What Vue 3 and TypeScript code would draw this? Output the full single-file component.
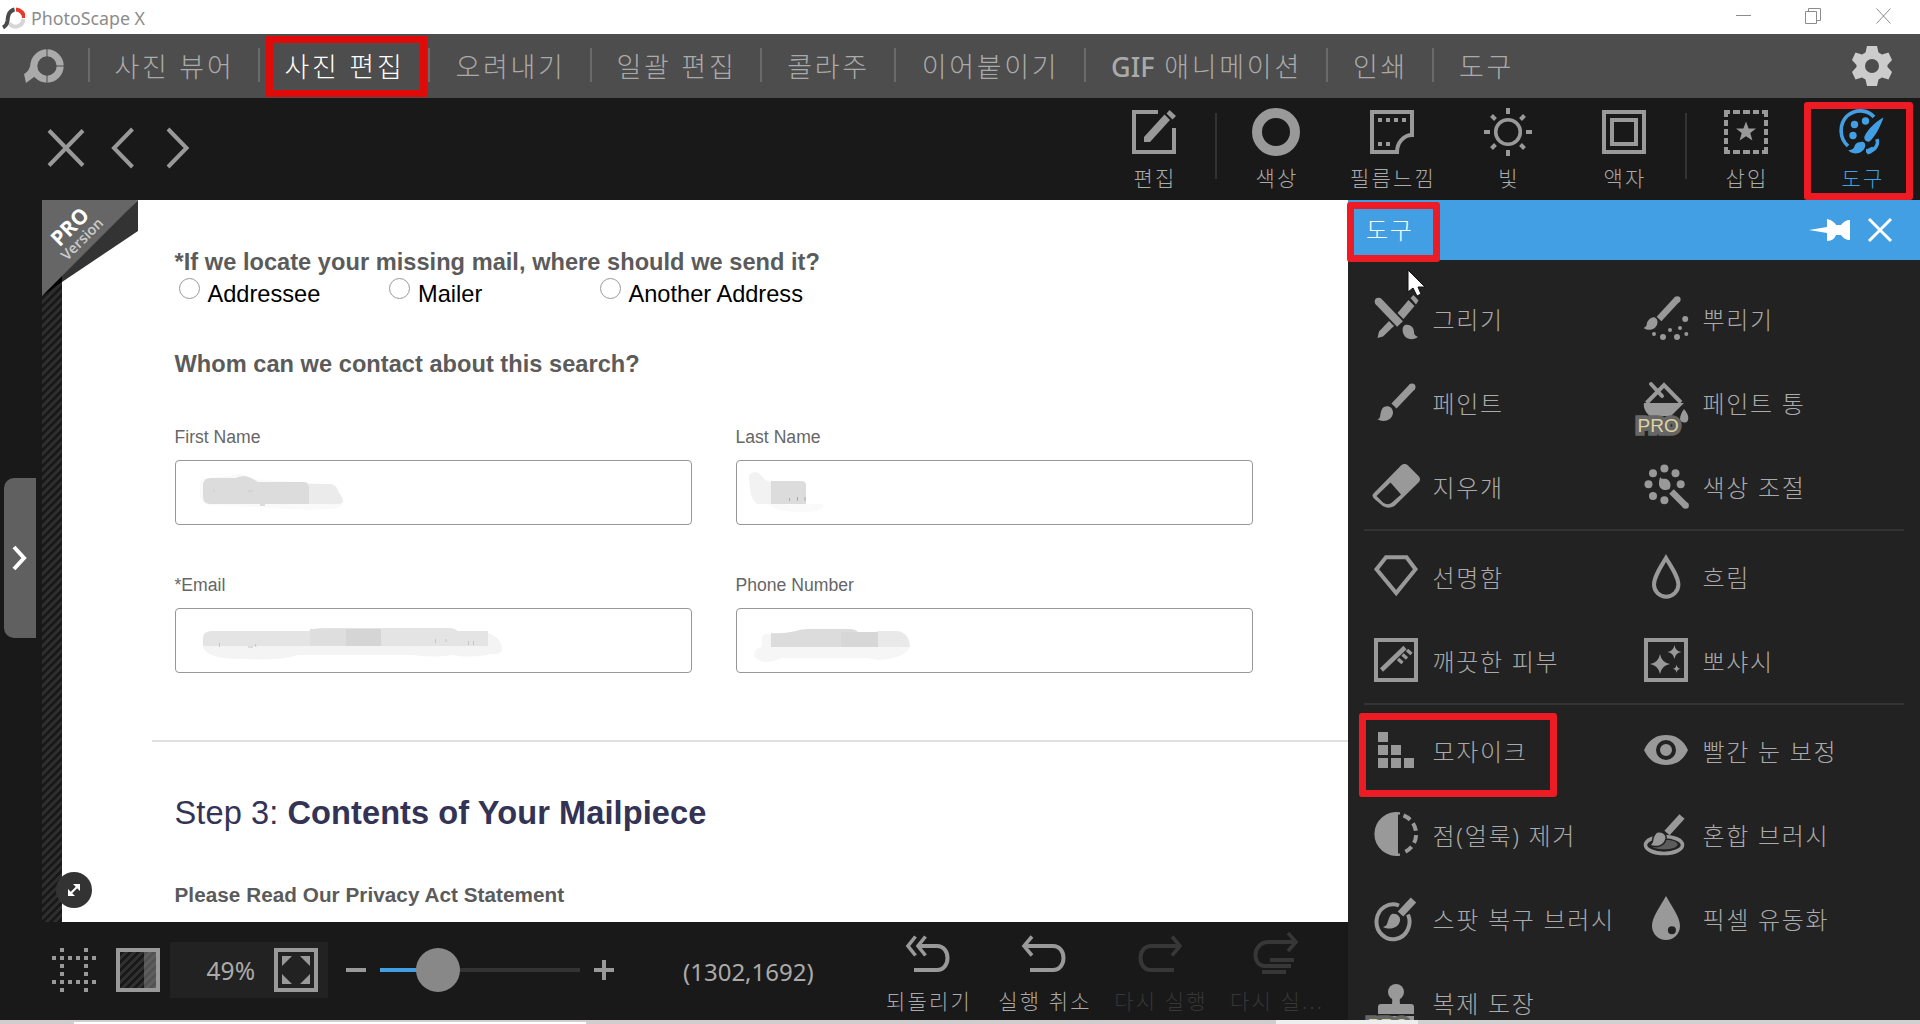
<script setup lang="ts">
interface MenuItem { label: string; width: number; active?: boolean; latin?: string }
interface IconItem { label: string; icon: string; pro?: boolean; active?: boolean; marked?: boolean; off?: boolean; sepBefore?: boolean }

const menu: MenuItem[] = [
  { label: '사진 뷰어', width: 170 },
  { label: '사진 편집', width: 170, active: true },
  { label: '오려내기', width: 162 },
  { label: '일괄 편집', width: 170 },
  { label: '콜라주', width: 134 },
  { label: '이어붙이기', width: 190 },
  { label: ' 애니메이션', width: 242, latin: 'GIF' },
  { label: '인쇄', width: 106 },
  { label: '도구', width: 106 },
]

const toolbar: IconItem[] = [
  { label: '편집', icon: '<path d="M28 4H4v40h40V20" fill="none" stroke="currentColor" stroke-width="4"/><path d="M14 29L34.500 6.500 40 12 20 34H14z"/><path d="M36.500 5.500L39.500 2 46 8 42.500 11.500z"/>' },
  { label: '색상', icon: '<circle cx="24" cy="24" r="19" fill="none" stroke="currentColor" stroke-width="10"/>', sepBefore: true },
  { label: '필름느낌', icon: '<path d="M4 4H44V27A15 17 0 0 0 29 44H4z" fill="none" stroke="currentColor" stroke-width="4"/><path d="M10 10h4v4h-4zM18 10h4v4h-4zM26 10h4v4h-4zM34 10h4v4h-4zM10 34h4v4h-4zM18 34h4v4h-4z"/>' },
  { label: '빛', icon: '<circle cx="24" cy="24" r="12.300" fill="none" stroke="currentColor" stroke-width="3.600"/><path d="M24 0v6M24 42v6M0 24h6M42 24h6M7.500 7.500l4 4M36.500 36.500l4 4M7.500 40.500l4-4M36.500 11.500l4-4" stroke="currentColor" stroke-width="4"/>' },
  { label: '액자', icon: '<path d="M4 4h40v40H4zM12 12h24v24H12z" fill="none" stroke="currentColor" stroke-width="4"/>' },
  { label: '삽입', icon: '<path d="M2 2h6v4H6v3H2zM40 2h6v7h-4V6h-2zM2 39h4v3h2v4H2zM42 39h4v7h-6v-4h2zM11 2h7v4h-7zM21 2h7v4h-7zM31 2h6v4h-6zM11 42h7v4h-7zM21 42h7v4h-7zM31 42h6v4h-6zM2 12h4v6H2zM2 21h4v6H2zM2 30h4v6H2zM42 12h4v6h-4zM42 21h4v6h-4zM42 30h4v6h-4z"/><path d="M24 13.500l2.600 7H34l-5.700 4.600 2.100 7.400-6.400-4.300-6.400 4.300 2.100-7.400L14 20.500h7.400z"/>', sepBefore: true },
  { label: '도구', icon: '<path d="M10 38C1 30 1 16 9 8c8-7 20-7 27 1" fill="none" stroke="currentColor" stroke-width="3.600"/><circle cx="27.500" cy="13" r="3.700"/><circle cx="16.500" cy="16.500" r="3.700"/><circle cx="15" cy="27.500" r="3.700"/><path d="M45.500 9.500c-3 9-9 20-14 24-3 1-6-2-5-5 3-7 11-15 19-19z"/><path d="M23 34c3-1 5 2 4 5-2 6-9 8-15 5-1-1-1-2-2-2 5 0 6-2 7-5 1-2 3-3 6-3z"/><path d="M39 31c2 6-2 11-10 14M28 43c3 0 5-2 7-3" fill="none" stroke="currentColor" stroke-width="3.400"/>', active: true },
]

const groups: IconItem[][] = [
  [
    { label: '그리기', icon: '<path d="M6.500 7.500L28 30" stroke="currentColor" stroke-width="8" stroke-linecap="butt"/><circle cx="6.500" cy="7.500" r="3.800"/><path d="M33 31c5-1 9 2 9 7 0 2 1 4 4 5-6 4-12 2-14-2-2-4-2-8 1-10zM25.500 19L36.500 6l6 6-11 13zM38.500 4l3-3 5 5.500-2.500 4zM17 27l5 5-11 10.500-5.500 1.500 1.500-6.500z"/>' },
    { label: '뿌리기', icon: '<path d="M35 5.500L17 25" stroke="currentColor" stroke-width="6.500"/><circle cx="35.300" cy="5.500" r="3.300"/><path d="M9 24c4-2 7 1 6.500 5-1 6-8 9-14 5 3-1 3-3 3.500-5 .5-2 2-4 4-5z"/><circle cx="43.200" cy="25" r="3"/><circle cx="38" cy="34" r="2"/><circle cx="28" cy="36" r="2"/><circle cx="12" cy="40" r="2"/><circle cx="21" cy="43" r="3"/><circle cx="35" cy="43" r="3"/><circle cx="44.300" cy="40" r="2"/>' },
    { label: '페인트', icon: '<path d="M40 9L22 28" stroke="currentColor" stroke-width="7"/><circle cx="40" cy="9" r="3.500"/><path d="M12 29c5-2 9 1 9 6-1 8-10 10-16 6 3 0 3-2 3.500-5s1.500-6 3.500-7z"/>' },
    { label: '페인트 통', icon: '<path d="M4.500 25L22 7l17 17.500" fill="none" stroke="currentColor" stroke-width="4"/><path d="M2 25h40l-13 13H8c-4-3-7-8-6-13z"/><path d="M9 6l11 12" stroke="currentColor" stroke-width="4" stroke-linecap="round"/><path d="M42 31c3 4 5 7 4 11s-8 3-8-1 2-7 4-10z"/>', pro: true },
    { label: '지우개', icon: '<path d="M2 31L29 3.500c2-2 5-2 7 0L46.500 14c2 2 2 4.500 0 6.500L23 43.500c-4 3-10 3-14-1l-7-6c-2-2-2-4 0-5.500z"/><path d="M4.500 34L18.500 20.500 29 32.500 20 40.500c-3 2.500-7 2-9.500-.5z" fill="#222"/>' },
    { label: '색상 조절', icon: '<circle cx="22.400" cy="6.500" r="4"/><circle cx="33.500" cy="11.300" r="4"/><circle cx="38.700" cy="22.300" r="4"/><circle cx="6.500" cy="22.300" r="4"/><circle cx="11" cy="11.300" r="4"/><circle cx="11" cy="34" r="4"/><circle cx="22.400" cy="38.300" r="4"/><path d="M18.500 15c1 3 3 1 6 2 4 2 5 6 3 10-6 3-11-1-10.500-6 0-3 .5-4 1.500-6z"/><path d="M29.500 29.500l14 14" stroke="currentColor" stroke-width="6.500"/><circle cx="43.600" cy="43.500" r="3.300"/>' },
  ],
  [
    { label: '선명함', icon: '<path d="M14 5.200h20.500l9 12L24.200 41 4.500 17.200z" fill="none" stroke="currentColor" stroke-width="4"/>' },
    { label: '흐림', icon: '<path d="M24 6C18 16 12 25 12 32.500a12 12 0 0 0 24.400 0C36.400 25 30 16 24 6z" fill="none" stroke="currentColor" stroke-width="4"/>' },
    { label: '깨끗한 피부', icon: '<path d="M4 4h40v40H4z" fill="none" stroke="currentColor" stroke-width="4"/><path d="M9.500 34L33 11.500" stroke="currentColor" stroke-width="4.500"/><path d="M35 14l4.500 4M30.500 18.500l4.500 4M26 23l4.500 4" stroke="currentColor" stroke-width="3.400"/>' },
    { label: '뽀샤시', icon: '<path d="M4 4h40v40H4z" fill="none" stroke="currentColor" stroke-width="4"/><path d="M18 18q1.500 8.500 10 10-8.500 1.500-10 10-1.500-8.500-10-10 8.500-1.500 10-10zM32.400 9q1 6 7 7-6 1-7 7-1-6-7-7 6-1 7-7zM34.600 28.500q.5 4 4 4.300-3.500.5-4 4.200-.5-3.700-4-4.200 3.500-.3 4-4.300z"/>' },
  ],
  [
    { label: '모자이크', icon: '<path d="M6 6h10v10H6zM6 19h10v10H6zM19 19h10v10H19zM6 32h10v10H6zM19 32h10v10H19zM32 32h10v10H32z"/>', marked: true },
    { label: '빨간 눈 보정', icon: '<path d="M2 24C7 13 15 9 24 9s17 4 22 15c-5 11-13 15-22 15S7 35 2 24z"/><circle cx="24" cy="24" r="8" fill="none" stroke="#222" stroke-width="4"/>' },
    { label: '점(얼룩) 제거', icon: '<path d="M28 2.300A22 22 0 1 0 28 45.700V43.500h-2V4.500h2z"/><path d="M31.500 5.400A20 20 0 0 1 31.500 42.600" fill="none" stroke="currentColor" stroke-width="4" stroke-dasharray="8 4.500"/>' },
    { label: '혼합 브러시', icon: '<ellipse cx="22" cy="35" rx="18.500" ry="8.500" fill="none" stroke="currentColor" stroke-width="3.600"/><ellipse cx="22" cy="34.500" rx="13.500" ry="4.800" fill="#5c5c5c"/><path d="M40 6.500L25 23" stroke="currentColor" stroke-width="7"/><path d="M15 22c5-1 10 2 9 7-2 8-11 9-17 6 4-1 3-3 4-7 1-3 2-5 4-6z" stroke="#222" stroke-width="1.500"/>' },
    { label: '스팟 복구 브러시', icon: '<path d="M27 11.500A16.500 17.500 0 1 0 36 20.500" fill="none" stroke="currentColor" stroke-width="4"/><path d="M41.500 6L28.500 20" stroke="currentColor" stroke-width="7.500"/><path d="M20 20c5-1 9 3 8 7-2 8-11 9-17 6 4-1 4-3 5-6s2-6 4-7z"/>' },
    { label: '픽셀 유동화', icon: '<path d="M24 2C18 13 10 23 10 32a14 14 0 0 0 28 0C38 23 30 13 24 2z"/><circle cx="29.900" cy="36.300" r="4" fill="#222"/>' },
    { label: '복제 도장', icon: '<circle cx="24" cy="14" r="8"/><path d="M19 18c2 4 1 6 1 8h-11q-3 0-3 3v7h36v-7q0-3-3-3H28c0-2-1-4 1-8zM6 38h36v8H6z"/>', pro: true },
  ],
]

const history: IconItem[] = [
  { label: '되돌리기', icon: '<path d="M11.500 4.500L4 14l7.500 9.500M21.500 4.500L14 14l7.500 9.500" fill="none" stroke="currentColor" stroke-width="3.600"/><path d="M14 14h19c14 0 14 24 0 24H10" fill="none" stroke="currentColor" stroke-width="4"/>' },
  { label: '실행 취소', icon: '<path d="M12 4.500L4 14l8 9.500" fill="none" stroke="currentColor" stroke-width="3.600"/><path d="M4 14h29c14 0 14 24 0 24H10" fill="none" stroke="currentColor" stroke-width="4"/>' },
  { label: '다시 실행', icon: '<path d="M36 4.500l8 9.500-8 9.500" fill="none" stroke="currentColor" stroke-width="3.600"/><path d="M44 14H15c-14 0-14 24 0 24h23" fill="none" stroke="currentColor" stroke-width="4"/>', off: true },
  { label: '다시 실...', icon: '<path d="M36 1l8 9-8 9" fill="none" stroke="currentColor" stroke-width="3.600"/><path d="M44 10H16C0 11 0 33 12 34h27M18 28h24M10 40h24" fill="none" stroke="currentColor" stroke-width="4"/>', off: true },
]
</script>

<template>
  <div class="app">
    <header class="titlebar">
      <svg class="mini-logo" width="24" height="24" viewBox="0 0 24 24" fill="none" stroke-width="4">
        <path d="M16 3.500A8.500 8.500 0 0 1 24 12" transform="translate(-1 0)" stroke="#ee3526" />
        <path d="M22.500 13A8 8.500 0 0 1 8 17" stroke="#d6d6d6" />
        <path d="M13.500 3.500C7 5 7 11 6.500 15 6 18 5 20 2 21.500" stroke="#4a4a4a" />
      </svg>
      <span class="app-name">PhotoScape X</span>
      <svg class="win-buttons" width="160" height="18" viewBox="0 0 160 18" fill="none" stroke="#8c8c8c">
        <path d="M0 8.500h15M69.500 4.500h11v12h-11zM72.500 4.500v-3h12v12h-4M140.500 1.500l14 15M154.500 1.500l-14 15" />
      </svg>
    </header>

    <nav class="menubar">
      <svg class="logo" width="44" height="44" viewBox="0 0 44 44">
        <circle cx="26" cy="22" r="13.200" fill="none" stroke="#aaa" stroke-width="7" />
        <path d="M11 17C8 25 8 27 3 30l2 9 8-6 6 1z" fill="#aaa" />
        <path d="M26 4v9M26 31v9M34 22h9" stroke="#4d4d4d" />
      </svg>
      <div v-for="m in menu" :key="m.label" class="menu-item" :class="{ active: m.active }" :style="{ width: m.width + 'px' }">
        <span><b v-if="m.latin">{{ m.latin }}</b>{{ m.label }}</span>
        <i v-if="m.active" class="mark mark-menu"></i>
      </div>
      <svg class="gear" width="40" height="40" viewBox="0 0 40 40" fill="#ccc">
        <path fill-rule="evenodd" d="M15 0h10l1.500 6.500 3.500 2 6.500-2L40 14l-4.500 5v2l4.500 5-3.500 7.500-6.500-2-3.500 2L25 40H15l-1.500-6.500-3.500-2-6.500 2L0 26l4.500-5v-2L0 14l3.500-7.500 6.500 2 3.500-2zM20 13a7 7 0 1 0 0 14 7 7 0 0 0 0-14z" />
      </svg>
    </nav>

    <div class="toolbar">
      <svg class="nav-icons" width="150" height="44" viewBox="0 0 150 44" fill="none" stroke="#999" stroke-width="4">
        <path d="M5 4.500l34 35M39 4.500L5 39.500M88.500 3L70 22l18.500 19M124 3l18.500 19L124 41" />
      </svg>
      <div class="tool-tabs">
        <template v-for="t in toolbar" :key="t.label">
          <div v-if="t.sepBefore" class="tab-sep"></div>
          <div class="tab" :class="{ active: t.active }">
            <svg width="48" height="48" viewBox="0 0 48 48" fill="currentColor" v-html="t.icon"></svg>
            <span>{{ t.label }}</span>
            <i v-if="t.active" class="mark mark-tab"></i>
          </div>
        </template>
      </div>
    </div>

    <div class="body">
      <main class="editor">
        <div class="stage">
          <div class="gutter">
            <div class="side-handle">
              <svg width="20" height="28" viewBox="0 0 20 28" fill="none" stroke="#fff" stroke-width="4"><path d="M3 3l10 11L3 25" /></svg>
            </div>
          </div>
          <div class="stripes"></div>
          <section class="document">
            <h3>*If we locate your missing mail, where should we send it?</h3>
            <div class="radios">
              <label><b></b>Addressee</label>
              <label><b></b>Mailer</label>
              <label><b></b>Another Address</label>
            </div>
            <h3 class="contact">Whom can we contact about this search?</h3>
            <div class="fields">
              <div class="field">
                <span>First Name</span>
                <div class="input">
                  <svg width="200" height="60" viewBox="0 0 200 60">
                    <path d="M24 22q1-5 8-5l24-2q6-5 14 0l5 3 58 4q30 0 34 16 3 9-12 10l-24 1-52-3-45-2q-10-3-10-8z" fill="#fafafa" />
                    <path d="M133 23h22q6 1 8 9 8 11-1 11h-29z" fill="#ebebeb" />
                    <path d="M27 24q0-7 8-7h25q8-4 15 0l7 4h45q6 0 6 5v17H34q-7 0-7-7z" fill="#dcdcdc" />
                    <path d="M84 44h5" stroke="#bbb" /><path d="M38 28v3M72 30h5" stroke="#ccc" />
                  </svg>
                </div>
              </div>
              <div class="field">
                <span>Last Name</span>
                <div class="input">
                  <svg width="200" height="60" viewBox="0 0 200 60">
                    <path d="M34 43h52q2 9-25 8-20 0-30-8z" fill="#fafafa" />
                    <path d="M12 14q6-6 12 0 4 6 10 7v22H20q-6-5-7-15z" fill="#f2f2f2" />
                    <path d="M34 20h30q5 0 5 4v19H34z" fill="#dcdcdc" />
                    <path d="M52.500 37v3M60.500 36v4M68 36v4" stroke="#aaa" />
                  </svg>
                </div>
              </div>
              <div class="field">
                <span>*Email</span>
                <div class="input">
                  <svg width="360" height="60" viewBox="0 0 360 60">
                    <path d="M28 37h284v9q-20 3-35 0-20 3-40 0H122q-18 6-54 4-40 0-41-13zM312 24q14 5 14 17-1 5-14 4z" fill="#f4f4f4" />
                    <path d="M27 29q0-7 9-7h98q4-3 12-3h128q4 0 8 3h30v15H27z" fill="#e4e4e4" />
                    <path d="M134 20h36v17h-36z" fill="#dedede" /><path d="M170 20h35v17h-35z" fill="#d5d5d5" />
                    <path d="M43.500 34v4M72 38h5M79 35l1 3M259.500 30v4M270 33v-3M292.500 32v4M297.500 32v4" stroke="#c4c4c4" />
                  </svg>
                </div>
              </div>
              <div class="field">
                <span>Phone Number</span>
                <div class="input">
                  <svg width="240" height="60" viewBox="0 0 240 60">
                    <path d="M25 28q3-5 9-3v13h139q-6 12-32 13l-10-2H45q-20 9-28-2 0-8 8-9z" fill="#f6f6f6" />
                    <path d="M140 22h20q12 1 13 16h-33z" fill="#e9e9e9" />
                    <path d="M34 24q12 1 25-2 5-2 12-2h42q5 0 8 3h20v15H34z" fill="#dcdcdc" />
                    <path d="M104 23h37v15h-37z" fill="#d7d7d7" />
                  </svg>
                </div>
              </div>
            </div>
            <hr />
            <h2><span>Step 3: </span>Contents of Your Mailpiece</h2>
            <h4>Please Read Our Privacy Act Statement</h4>
          </section>
          <div class="pro-corner">
            <svg width="96" height="96" viewBox="0 0 96 96">
              <path d="M96 0v31L20 82V70z" fill="#333" /><path d="M20 70v12L0 96z" fill="#000" />
              <path d="M0 0h96L0 96z" fill="#666" />
            </svg>
            <div class="pro-words"><strong>PRO</strong><em>Version</em></div>
          </div>
          <div class="resize">
            <svg width="36" height="36" viewBox="0 0 36 36" fill="#fff"><path d="M17 12h7v7zM12 17v7h7z" /><path d="M14 22l8-8" stroke="#fff" stroke-width="2" /></svg>
          </div>
        </div>

        <footer class="statusbar">
          <svg class="grid-icon" width="44" height="44" viewBox="0 0 44 44" stroke="#999" stroke-width="4">
            <path d="M0 10h44M0 34h44" stroke-dasharray="4 4" /><path d="M10 0v44M34 0v44" stroke-dasharray="4 4" />
          </svg>
          <div class="shade"><i></i></div>
          <div class="zoom">
            <span>49%</span>
            <svg width="44" height="44" viewBox="0 0 44 44" fill="#999">
              <path d="M2 2h40v40H2z" fill="none" stroke="#999" stroke-width="4" />
              <path d="M8 8h10L8 18zM26 8h10v10zM8 26l10 10H8zM36 26v10H26z" />
            </svg>
          </div>
          <svg class="slider" width="268" height="44" viewBox="0 0 268 44">
            <path d="M0 22h20M248 22h20M258 12v20" stroke="#999" stroke-width="4" />
            <path d="M34 22h200" stroke="#333" stroke-width="4" />
            <path d="M34 22h50" stroke="#429fe4" stroke-width="4" />
            <circle cx="92" cy="22" r="22" fill="#888" />
          </svg>
          <span class="coords">(1302,1692)</span>
          <div class="history">
            <div v-for="h in history" :key="h.label" class="action" :class="{ off: h.off }">
              <svg width="48" height="48" viewBox="0 0 48 48" fill="currentColor" v-html="h.icon"></svg>
              <span>{{ h.label }}</span>
            </div>
          </div>
        </footer>
      </main>

      <aside class="panel">
        <div class="panel-head">
          <div class="panel-title">도구<i class="mark mark-title"></i></div>
          <svg width="84" height="26" viewBox="0 0 84 26" fill="#fff">
            <path d="M0 13l18-3V2c5 1 8 4 9 6h5c2-3 5-5 9-5v20c-4 0-7-2-9-5h-5c-1 3-4 6-9 6v-8z" />
            <path d="M60 2l22 22M82 2L60 24" stroke="#fff" stroke-width="3" />
          </svg>
        </div>
        <div class="tools">
          <div v-for="(g, i) in groups" :key="i" class="group">
            <div v-for="t in g" :key="t.label" class="tool">
              <svg width="48" height="48" viewBox="0 0 48 48" fill="currentColor" v-html="t.icon"></svg>
              <span class="tool-name">{{ t.label }}</span>
              <span v-if="t.pro" class="pro">PRO</span>
              <i v-if="t.marked" class="mark mark-tool"></i>
            </div>
          </div>
        </div>
        <svg class="cursor" width="20" height="30" viewBox="0 0 20 30"><path d="M1 1v22l5-4 4 8 4-2-3-7h7z" fill="#fff" stroke="#111" /></svg>
      </aside>
    </div>
    <div class="backdrop"></div>
  </div>
</template>

<style>
body { margin: 0; overflow: hidden; }
</style>

<style scoped>
* { box-sizing: border-box; }
svg { display: block; flex: none; }
.app {
  width: 1920px; height: 1024px; overflow: hidden; display: flex; flex-direction: column;
  background: #191919; color: #aaa; font-family: "Noto Sans", "Noto Sans CJK KR", sans-serif; font-weight: 300;
}
.titlebar { height: 34px; background: #fff; display: flex; align-items: center; flex: none; }
.mini-logo { margin-left: 1px; margin-top: 1px; }
.app-name { font-size: 17.800px; color: #8c8c8c; margin-left: 6px; margin-top: 2px; font-weight: 400; flex: 1; }
.win-buttons { margin-right: 24px; margin-top: -2px; }

.menubar { height: 64px; background: #4d4d4d; display: flex; align-items: center; flex: none; }
.logo { margin: 0 23px 0 21px; }
.menu-item {
  position: relative; height: 64px; display: flex; align-items: center; justify-content: center;
  font-size: 27px; letter-spacing: 2.700px; padding: 0 0 2px 3px; white-space: pre;
}
.menu-item b { font-weight: 500; letter-spacing: 0; }
.menu-item::before { content: ""; position: absolute; left: 0; top: 14px; width: 2px; height: 34px; background: #6b6b6b; }
.menu-item.active { color: #fff; }
.gear { margin-left: auto; margin-right: 28px; }

.mark { position: absolute; border: 7px solid #ed1c24; border-radius: 3px; pointer-events: none; z-index: 5; }
.mark-menu { left: 8px; top: 2px; width: 161px; height: 61px; border-color: #e00a08; border-radius: 0; }
.mark-tab { left: 0; top: 4px; width: 109px; height: 98px; }
.mark-title { left: -1px; top: 2px; width: 93px; height: 60px; }

.toolbar { height: 102px; display: flex; justify-content: space-between; flex: none; }
.nav-icons { margin: 28px 0 0 44px; }
.tool-tabs { display: flex; }
.tab { position: relative; width: 116px; padding-top: 10px; display: flex; flex-direction: column; align-items: center; color: #999; }
.tab span, .action span { font-size: 21px; letter-spacing: 2.200px; padding-left: 2px; line-height: 28px; white-space: nowrap; color: #aaa; }
.tab span { margin-top: 8px; }
.tab.active, .tab.active span { color: #429fe4; }
.tab-sep { width: 2px; height: 66px; margin: 15px 1px 0 3px; background: #333; }

.body { height: 820px; display: flex; flex: none; }
.editor { width: 1348px; display: flex; flex-direction: column; }
.stage { position: relative; height: 722px; display: flex; }
.gutter { width: 42px; display: flex; align-items: center; padding: 0 0 3px 4px; }
.side-handle { width: 32px; height: 160px; margin-top: -3px; background: #606060; border-radius: 10px 0 0 10px; display: flex; align-items: center; padding-left: 7px; }
.stripes { width: 20px; background: repeating-linear-gradient(135deg, #191919 0 3px, #2e2e2e 3px 5.657px); }
.document {
  width: 1286px; background: #fff; padding: 46px 95px 0 112.500px; overflow: hidden;
  font-family: "Liberation Sans", Arial, sans-serif; font-weight: 400; color: #5b5b5b;
}
h2, h3, h4 { margin: 0; white-space: pre; position: relative; top: 1px; }
h3 { font-size: 23.600px; line-height: 30px; letter-spacing: .03px; }
.radios { display: flex; margin-top: 2px; height: 30px; color: #000; font-size: 23.600px; line-height: 32px; }
.radios label { width: 210.500px; display: flex; white-space: nowrap; }
.radios b { width: 21px; height: 21px; border: 1.500px solid #999; border-radius: 50%; margin: 0 8px 0 4px; flex: none; }
.contact { margin-top: 40px; }
.fields { display: grid; grid-template-columns: 517px 517px; column-gap: 44px; row-gap: 49px; margin-top: 48px; }
.field { font-size: 17.600px; line-height: 22px; color: #666; }
.field span { display: block; }
.input { height: 65px; margin-top: 12px; border: 1px solid #979797; border-radius: 4px; }
hr { border: 0; height: 2px; background: #e0e0e0; margin: 67px -95px 0 -23px; }
h2 { margin-top: 50px; font-size: 32.600px; line-height: 40px; letter-spacing: .08px; color: #333355; }
h2 span { font-weight: 400; }
h4 { margin-top: 47px; font-size: 20.700px; line-height: 30px; letter-spacing: .05px; }
.pro-corner { position: absolute; left: 42px; top: 0; }
.pro-words {
  position: absolute; left: -9px; top: 14px; width: 84px; transform: rotate(-45deg); text-align: center;
  font-family: "Open Sans", sans-serif; display: flex; flex-direction: column;
}
.pro-words strong { font-size: 21px; line-height: 20px; color: #fff; font-weight: 700; }
.pro-words em { font-size: 14.500px; line-height: 16px; color: #ccc; font-style: normal; font-weight: 600; }
.resize { position: absolute; left: 56px; top: 672px; background: #333; border-radius: 50%; }

.statusbar { height: 98px; display: flex; align-items: flex-start; }
.grid-icon { margin: 26px 0 0 52px; }
.shade { width: 44px; height: 44px; margin: 26px 0 0 20px; border: 4px solid #999; background: repeating-linear-gradient(135deg, #191919 0 3px, #303030 3px 5.657px); }
.shade i { display: block; width: 12px; height: 36px; margin-left: 24px; background: rgba(140, 140, 140, .5); }
.zoom { width: 158px; height: 56px; margin: 20px 0 0 10px; padding-right: 10px; background: #222; display: flex; align-items: center; justify-content: flex-end; }
.zoom span { font-size: 24.500px; font-weight: 400; margin-right: 19px; margin-top: 1px; }
.slider { margin: 26px 0 0 18px; }
.coords { font-size: 24px; font-weight: 400; margin: 33px 0 0 69px; width: 132px; white-space: nowrap; }
.history { display: flex; margin-left: auto; margin-right: 14px; }
.action { width: 116px; padding-top: 10px; display: flex; flex-direction: column; align-items: center; color: #999; }
.action span { margin-top: 7px; }
.action.off, .action.off span { color: #373737; }

.panel { position: relative; width: 572px; background: #222; overflow: visible; }
.panel-head { height: 60px; background: #429fe4; display: flex; align-items: center; justify-content: space-between; padding-right: 27px; }
.panel-title { position: relative; padding-left: 18px; height: 60px; line-height: 60px; font-size: 24px; letter-spacing: 1.700px; color: #fff; }
.tools { padding: 17px 16px 0; height: 760px; overflow: hidden; }
.group { display: grid; grid-template-columns: 270px 270px; grid-auto-rows: 84px; }
.group + .group { border-top: 2px solid #333; padding-top: 4px; }
.tool { position: relative; display: flex; align-items: center; padding-left: 8px; color: #999; }
.tool svg { margin-top: -2px; }
.tool-name { margin: -2px 0 0 12.500px; font-size: 24px; letter-spacing: 1.700px; white-space: nowrap; color: #aaa; }
.pro {
  position: absolute; left: 3.500px; top: 53px; font: 400 19px/24px "Liberation Sans", sans-serif; color: #ddd2a4;
  -webkit-text-stroke: 7.500px #666; paint-order: stroke fill; stroke-linejoin: round;
}
.mark-tool { left: -5px; top: 4px; width: 198px; height: 84px; }
.cursor { position: absolute; left: 59px; top: 69px; }
.backdrop { height: 4px; background: linear-gradient(90deg, transparent 74px, #fff 74px 586px, transparent 586px) 0 2px no-repeat, linear-gradient(90deg, #cfcdce 0 1276px, #eee 1276px 1418px, #d0d0d0 1418px); }
</style>
